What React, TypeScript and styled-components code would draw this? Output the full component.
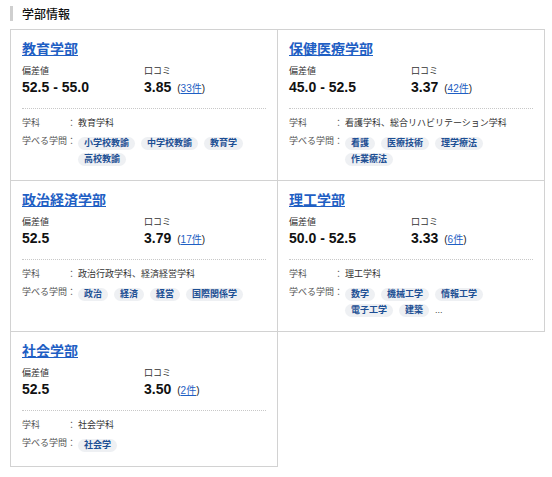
import React from "react";
import styled, { createGlobalStyle } from "styled-components";

const GlobalStyle = createGlobalStyle`
  html, body { margin: 0; padding: 0; background: #fff; }
  body {
    font-family: "Liberation Sans", "Noto Sans CJK JP", sans-serif;
    color: #222;
  }
`;

const Page = styled.div`
  padding: 6px 0 0 10px;
  width: 535px;
`;

const SectionHeading = styled.h2`
  display: flex;
  align-items: center;
  gap: 9px;
  margin: 0 0 8px;
  height: 15px;
  font-size: 12px;
  font-weight: 500;
  color: #111;
  &::before {
    content: "";
    width: 3px;
    height: 15px;
    background: #cfcfcf;
  }
`;

const Grid = styled.div`
  display: grid;
  grid-template-columns: 1fr 1fr;
  border-top: 1px solid #d2d2d2;
  border-left: 1px solid #d2d2d2;
`;

const Card = styled.div`
  border-right: 1px solid #d2d2d2;
  border-bottom: 1px solid #d2d2d2;
  padding: 9px 11px 14px 11px;
  display: flex;
  flex-direction: column;
`;

const Title = styled.a`
  font-size: 14px;
  line-height: 20px;
  font-weight: bold;
  color: #1f5fc4;
  text-decoration: underline;
  text-underline-offset: 1px;
  align-self: flex-start;
  margin-bottom: 6px;
`;

const Stats = styled.div`
  display: grid;
  grid-template-columns: 1fr 1fr;
  padding-bottom: 10px;
  border-bottom: 1px dotted #c8c8c8;
`;

const Stat = styled.div`
  display: flex;
  flex-direction: column;
`;

const StatLabel = styled.span`
  font-size: 9px;
  line-height: 13px;
  color: #333;
`;

const StatValue = styled.span`
  font-size: 14px;
  line-height: 19px;
  font-weight: bold;
  color: #111;
`;

const Count = styled.span`
  font-size: 10px;
  font-weight: normal;
  color: #222;
  margin-left: 6px;
`;

const CountLink = styled.a`
  color: #1f5fc4;
  text-decoration: underline;
`;

const Details = styled.div`
  padding-top: 8px;
  display: flex;
  flex-direction: column;
  gap: 5px;
`;

const Row = styled.div`
  display: flex;
  align-items: flex-start;
  font-size: 9px;
  line-height: 13px;
`;

const RowLabel = styled.span`
  width: 46px;
  flex: none;
  color: #555;
`;

const Colon = styled.span`
  width: 10px;
  margin-left: -1px;
  flex: none;
  color: #555;
`;

const RowValue = styled.span`
  color: #333;
  margin-left: 1px;
`;

const Tags = styled.div`
  display: flex;
  flex-wrap: wrap;
  align-items: center;
  gap: 3px 6px;
  padding-top: 2px;
  margin-left: 1px;
  flex: 1;
`;

const Tag = styled.span`
  display: inline-flex;
  align-items: center;
  height: 13px;
  padding: 0 6px;
  border-radius: 7px;
  background: #eef0f3;
  color: #1d4f94;
  font-weight: bold;
  font-size: 9px;
`;

const More = styled.span`
  color: #444;
  font-size: 9px;
  line-height: 13px;
`;

type Faculty = {
  name: string;
  score: string;
  rating: string;
  count: string;
  depts: string;
  tags: string[];
  more?: boolean;
};

const faculties: Faculty[] = [
  { name: "教育学部", score: "52.5 - 55.0", rating: "3.85", count: "33件", depts: "教育学科", tags: ["小学校教諭", "中学校教諭", "教育学", "高校教諭"] },
  { name: "保健医療学部", score: "45.0 - 52.5", rating: "3.37", count: "42件", depts: "看護学科、総合リハビリテーション学科", tags: ["看護", "医療技術", "理学療法", "作業療法"] },
  { name: "政治経済学部", score: "52.5", rating: "3.79", count: "17件", depts: "政治行政学科、経済経営学科", tags: ["政治", "経済", "経営", "国際関係学"] },
  { name: "理工学部", score: "50.0 - 52.5", rating: "3.33", count: "6件", depts: "理工学科", tags: ["数学", "機械工学", "情報工学", "電子工学", "建築"], more: true },
  { name: "社会学部", score: "52.5", rating: "3.50", count: "2件", depts: "社会学科", tags: ["社会学"] },
];

export default function App() {
  return (
    <>
      <GlobalStyle />
      <Page>
        <SectionHeading>学部情報</SectionHeading>
        <Grid>
          {faculties.map((f) => (
            <Card key={f.name}>
              <Title href="#">{f.name}</Title>
              <Stats>
                <Stat>
                  <StatLabel>偏差値</StatLabel>
                  <StatValue>{f.score}</StatValue>
                </Stat>
                <Stat>
                  <StatLabel>口コミ</StatLabel>
                  <StatValue>
                    {f.rating}
                    <Count>
                      (<CountLink href="#">{f.count}</CountLink>)
                    </Count>
                  </StatValue>
                </Stat>
              </Stats>
              <Details>
                <Row>
                  <RowLabel>学科</RowLabel>
                  <Colon>：</Colon>
                  <RowValue>{f.depts}</RowValue>
                </Row>
                <Row>
                  <RowLabel>学べる学問</RowLabel>
                  <Colon>：</Colon>
                  <Tags>
                    {f.tags.map((t) => (
                      <Tag key={t}>{t}</Tag>
                    ))}
                    {f.more && <More>...</More>}
                  </Tags>
                </Row>
              </Details>
            </Card>
          ))}
        </Grid>
      </Page>
    </>
  );
}
